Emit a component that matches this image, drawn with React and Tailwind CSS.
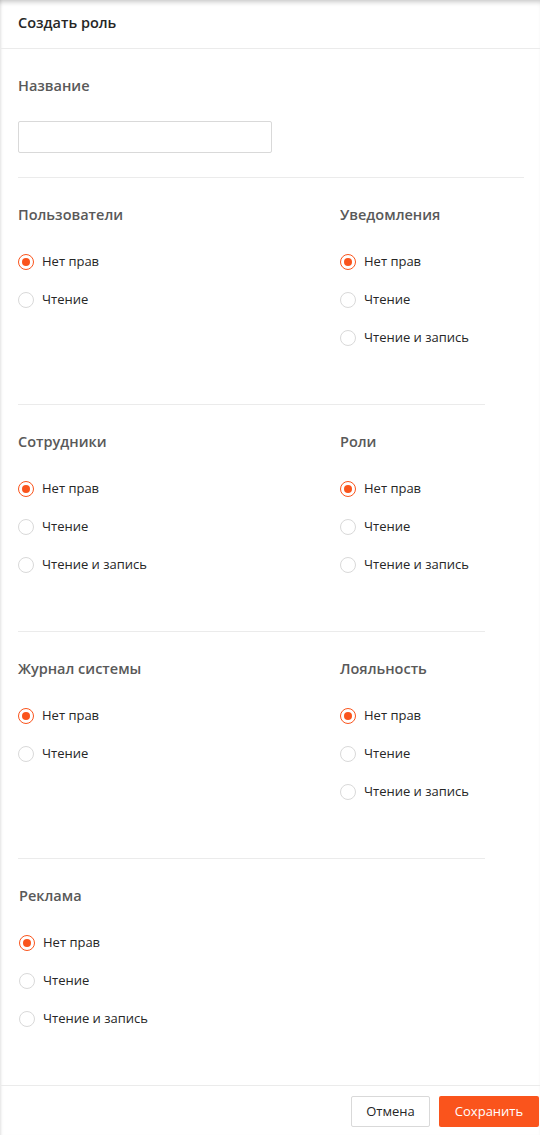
import React, { useState } from 'react';

const sections = [
  [
    { title: 'Пользователи', options: ['Нет прав', 'Чтение'] },
    { title: 'Уведомления', options: ['Нет прав', 'Чтение', 'Чтение и запись'] },
  ],
  [
    { title: 'Сотрудники', options: ['Нет прав', 'Чтение', 'Чтение и запись'] },
    { title: 'Роли', options: ['Нет прав', 'Чтение', 'Чтение и запись'] },
  ],
  [
    { title: 'Журнал системы', options: ['Нет прав', 'Чтение'] },
    { title: 'Лояльность', options: ['Нет прав', 'Чтение', 'Чтение и запись'] },
  ],
  [{ title: 'Реклама', options: ['Нет прав', 'Чтение', 'Чтение и запись'] }],
];

function RadioGroup({ title, options }) {
  const [value, setValue] = useState(options[0]);
  return (
    <div>
      <div className="text-[14.5px] leading-[20px] font-semibold text-[#595959]">{title}</div>
      <div className="mt-[27px] flex flex-col gap-[18px]">
        {options.map((opt) => (
          <label key={opt} className="flex items-center h-[20px] cursor-pointer" onClick={() => setValue(opt)}>
            {value === opt ? (
              <span className="w-[16px] h-[16px] rounded-full border border-[#fa541c] flex items-center justify-center">
                <span className="w-[8px] h-[8px] rounded-full bg-[#fa541c]" />
              </span>
            ) : (
              <span className="w-[16px] h-[16px] rounded-full border border-[#d9d9d9]" />
            )}
            <span className="ml-[8px] text-[13px] text-[#262626]">{opt}</span>
          </label>
        ))}
      </div>
    </div>
  );
}

export default function App() {
  return (
    <div
      className="min-h-screen bg-white shadow-[inset_0_5px_5px_-3px_rgba(0,0,0,0.22),inset_3px_0_3px_-2px_rgba(0,0,0,0.1)]"
      style={{ fontFamily: '"Open Sans", "Noto Sans", sans-serif' }}
    >
      {/* Заголовок */}
      <div className="h-[49px] pt-[13px] px-[18px] border-b border-[#ebebeb]">
        <div className="text-[14.5px] leading-[20px] font-semibold text-[#262626]">Создать роль</div>
      </div>

      <div className="px-[18px]">
        <div className="pt-[27px] text-[14.5px] leading-[20px] font-semibold text-[#595959]">Название</div>
        <input
          type="text"
          className="mt-[25px] block w-[254px] h-[32px] border border-[#d9d9d9] rounded-[2px] px-2 text-[13px] outline-none"
        />
        <div className="mt-[24px] h-px w-[506px] bg-[#ebebeb]" />

        {sections.map((row, i) => (
          <div key={i}>
            <div className={`pt-[27px] grid grid-cols-[322px_1fr] items-start ${row.length === 1 ? 'pl-[1px]' : ''}`}>
              {row.map((g) => (
                <RadioGroup key={g.title} {...g} />
              ))}
            </div>
            {i < sections.length - 1 && <div className="mt-[56px] h-px w-[467px] bg-[#ebebeb]" />}
          </div>
        ))}
      </div>

      {/* Кнопки */}
      <div className="mt-[56px] border-t border-[#ebebeb] pt-[10px] pb-[8px] pr-[1px] flex justify-end gap-[9px]">
        <button className="w-[79px] h-[31px] border border-[#d9d9d9] rounded-[2px] bg-white text-[13px] text-[#262626]">
          Отмена
        </button>
        <button className="w-[100px] h-[31px] rounded-[2px] bg-[#fa541c] text-[13px] text-white">
          Сохранить
        </button>
      </div>
    </div>
  );
}
